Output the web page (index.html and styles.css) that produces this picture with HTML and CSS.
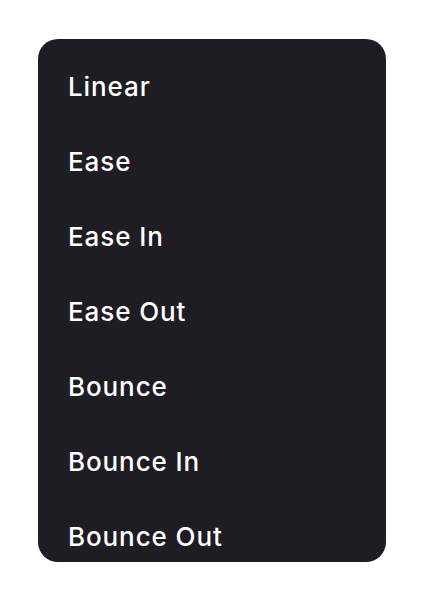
FILE: index.html
```html
<!DOCTYPE html>
<html lang="en">
  <head>
    <meta charset="UTF-8" />
    <meta name="viewport" content="width=device-width, initial-scale=1.0" />
    <title>Easing Menu</title>
    <link rel="stylesheet" href="styles.css">
  </head>
  <body>
    <ul class="menu">
      <li class="menu-item">Linear</li>
      <li class="menu-item">Ease</li>
      <li class="menu-item">Ease In</li>
      <li class="menu-item">Ease Out</li>
      <li class="menu-item">Bounce</li>
      <li class="menu-item">Bounce In</li>
      <li class="menu-item">Bounce Out</li>
    </ul>
  </body>
</html>
```

FILE: styles.css
```css
body {
  margin: 0;
  padding: 39px 0 0 38px;
  background: #ffffff;
  font-family: Inter, "Noto Sans", sans-serif;
}
.menu {
  list-style: none;
  margin: 0;
  padding: 10px 0 0;
  width: 348px;
  height: 523px;
  box-sizing: border-box;
  background-color: #1e1d23;
  border-radius: 20px;
  overflow: hidden;
}
.menu-item {
  padding: 23px 29px 22px 30px;
  font-size: 26px;
  line-height: 30px;
  font-weight: 500;
  letter-spacing: 0.9px;
  color: #ffffff;
  cursor: pointer;
}
```
